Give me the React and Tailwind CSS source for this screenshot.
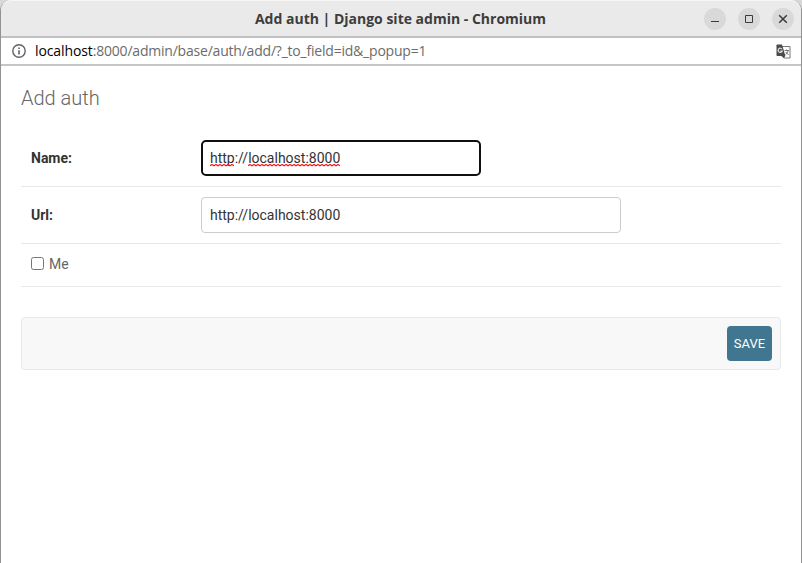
function WindowButton({ children }) {
  return (
    <span className="flex size-[22px] items-center justify-center rounded-full bg-[#d9d9d9]">
      <svg width="22" height="22" viewBox="0 0 22 22" fill="none" stroke="#3a3a3a">
        {children}
      </svg>
    </span>
  );
}

function TitleBar() {
  return (
    <header className="flex h-[38px] shrink-0 items-center rounded-t-[10px] border-t border-b-2 border-t-[#f6f6f6] border-b-[#c1c1c1] bg-[#eaeaea] pr-[7px] pl-[96px]">
      <h1 className="flex-1 text-center font-['Open_Sans',sans-serif] text-[14px] font-bold whitespace-nowrap text-[#3d3d3d]">
        Add auth | Django site admin - Chromium
      </h1>
      <div className="flex gap-3">
        <WindowButton>
          <path d="M7 13.5h8" />
        </WindowButton>
        <WindowButton>
          <path d="M7.5 7.5h7v7h-7z" />
        </WindowButton>
        <WindowButton>
          <path d="M7.2 7.2l7.6 7.6M14.8 7.2l-7.6 7.6" strokeWidth="1.5" />
        </WindowButton>
      </div>
    </header>
  );
}

function AddressBar() {
  return (
    <div className="flex h-7 shrink-0 items-center border-b-2 border-[#c6c6c6] pr-[10px] pl-[11px]">
      <svg width="14" height="14" viewBox="0 0 14 14" fill="none" stroke="#5f6368">
        <circle cx="7" cy="7" r="6.2" strokeWidth="1.4" />
        <path d="M7 3.4v1.5M7 6.2v4.3" strokeWidth="1.6" />
      </svg>
      <span className="ml-[9px] font-['Open_Sans',sans-serif] text-[14px] leading-[26px] tracking-[-0.21px] whitespace-nowrap text-[#6b6b6b]">
        <span className="tracking-[-0.1px] text-black">localhost</span>:8000/admin/base/auth/add/?_to_field=id&amp;_popup=1
      </span>
      <svg className="ml-auto" width="15" height="15" viewBox="0 0 15 15" fill="none">
        <path d="M6 2.5h8v11.5H8" stroke="#777" />
        <path d="M1.2 0.5h4.800l3.400 11.500H1.200Q.5 12 .5 11.300V1.200Q.5 .5 1.200 .5Z" fill="#4b4b4b" />
        <path d="M5.500 12h3.900l-1.700 2.300z" fill="#4b4b4b" />
        <path d="M6 5.200A2.100 2.100 0 1 0 6.200 7H4.300" stroke="#e8e8e8" strokeWidth="1.2" />
        <path d="M8.500 6.500h4.500M10.500 5.500v1M12.300 6.500Q11.500 9.500 9.500 10.500M9.700 8L12.500 11" stroke="#777" />
      </svg>
    </div>
  );
}

function Squiggle({ width, className }) {
  const points = Array.from({ length: Math.floor(width / 2) + 1 }, (_, i) => `${i * 2},${i % 2 ? 0.5 : 1.7}`).join(" ");
  return (
    <svg className={className} width={width} height="3" viewBox={`0 0 ${width} 3`} fill="none">
      <polyline points={points} stroke="#ff1010" strokeWidth="1.2" />
    </svg>
  );
}

function Field({ label, children }) {
  return (
    <div className="flex h-[57px] items-center border-b border-[#e8e8e8] pl-[10px]">
      <span className="w-[170px] font-bold">{label}</span>
      {children}
    </div>
  );
}

export default function App() {
  return (
    <div className="h-[563px] w-[802px] overflow-hidden bg-[#d8d8d8]">
      <div className="flex h-full flex-col rounded-t-[11px] border-x border-[#929292] bg-white font-['Roboto',sans-serif] text-[14px] text-[#333]">
        <TitleBar />
        <AddressBar />
        <main className="px-5 pt-5">
          <h2 className="mb-[20px] text-[20px] leading-[24px] font-light text-[#666]">Add auth</h2>
          <Field label="Name:">
            <div className="relative flex h-9 w-[280px] items-center rounded-[5px] border-2 border-[#101010] pl-[7px]">
              http://localhost:8000
              <Squiggle width={24} className="absolute top-[22px] left-[7px]" />
              <Squiggle width={92} className="absolute top-[22px] left-[45px]" />
            </div>
          </Field>
          <Field label="Url:">
            <div className="flex h-9 w-[420px] items-center rounded-[4px] border border-[#ccc] pl-2">
              http://localhost:8000
            </div>
          </Field>
          <div className="flex h-[43px] items-center border-b border-[#e8e8e8] pb-[3px] pl-[10px] text-[#666]">
            <span className="mr-[5px] size-[13px] rounded-[2.5px] border border-[#767676]" />
            <span className="pt-px">Me</span>
          </div>
          <div className="mt-[30px] flex h-[53px] items-center justify-end rounded-[4px] border border-[#e8e8e8] bg-[#f8f8f8] pr-2">
            <button className="flex h-[35px] w-[45px] items-center justify-center rounded-[4px] bg-[#417690] text-[13px] text-white">
              SAVE
            </button>
          </div>
        </main>
      </div>
    </div>
  );
}
